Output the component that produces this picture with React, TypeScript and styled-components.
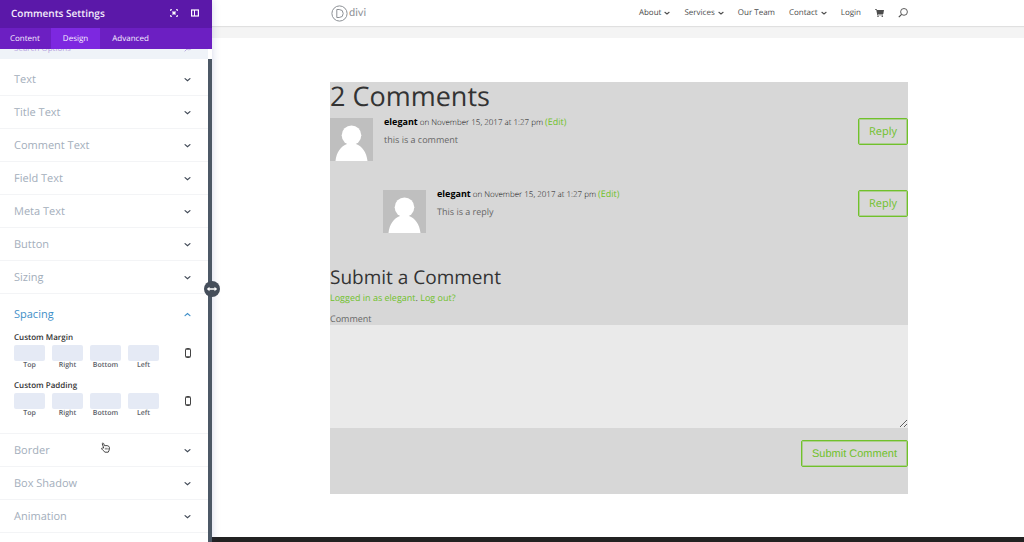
import React from "react";
import styled, { createGlobalStyle } from "styled-components";

const GREEN = "#70c12b";

const Global = createGlobalStyle`
  *, *::before, *::after { box-sizing: border-box; }
  body {
    margin: 0;
    background: #fff;
    font-family: "Open Sans", "Liberation Sans", sans-serif;
    font-size: 9px;
    color: #666;
    text-rendering: geometricPrecision;
  }
  button, input, textarea { font: inherit; color: inherit; margin: 0; text-rendering: inherit; }
  h1, h2, h3, p { margin: 0; font-weight: 400; }
  a { color: ${GREEN}; text-decoration: none; }
`;

const Shell = styled.div`
  display: flex;
  height: 100vh;
  overflow: hidden;
`;

const Panel = styled.aside`
  position: relative;
  display: flex;
  flex-direction: column;
  flex: 0 0 212px;
  box-shadow: 0 0 8px rgba(60, 70, 160, 0.22);
  z-index: 1;
`;

const PanelHeader = styled.header`
  display: flex;
  align-items: center;
  gap: 13px;
  flex: 0 0 28px;
  padding: 0 13px 2px 11px;
  background: #5b18a9;
  color: #fff;
`;

const PanelTitle = styled.h2`
  flex: 1;
  font-size: 10px;
  line-height: 16px;
  font-weight: 600;
  color: #f4edfb;
`;

const IconButton = styled.button`
  display: flex;
  padding: 0;
  border: 0;
  background: none;
  color: inherit;
`;

const Tabs = styled.nav`
  display: flex;
  flex: 0 0 21px;
  background: #6c1fc2;
`;

const Tab = styled.button<{ $active?: boolean }>`
  padding: 0 12px;
  border: 0;
  background: ${(p) => (p.$active ? "#7d28e0" : "transparent")};
  color: #f7f0ff;
  font-size: 8px;
  font-weight: 500;
  &:first-child { padding: 0 11px 0 10px; }
`;

const PanelScroll = styled.div`
  flex: 1;
  overflow: hidden;
  background: #fff;
  border-right: 4px solid #4c5866;
  border-image: linear-gradient(#fff 11px, #4c5866 11px) 1;
  border-width: 0 4px 0 0;
`;

const SearchBar = styled.label`
  display: flex;
  align-items: flex-end;
  height: 10px;
  overflow: hidden;
  padding: 0 16px 0 14px;
  background: #eff3f8;
  color: #b8a6e0;
`;

const SearchInput = styled.input`
  flex: 1;
  min-width: 0;
  height: 22px;
  padding: 0;
  border: 0;
  background: none;
  font-size: 8px;
  &::placeholder { color: #b8a6e0; opacity: 1; }
`;

const SearchGlyph = styled.span`
  display: flex;
  align-items: center;
  height: 22px;
`;

const Group = styled.section`
  border-bottom: 1px solid #f3f4f6;
  &:nth-of-type(1) { padding-top: 4px; }
`;

const GroupToggle = styled.button<{ $open?: boolean }>`
  display: flex;
  align-items: center;
  justify-content: space-between;
  width: 100%;
  height: ${(p) => (p.$open ? 40 : 32)}px;
  padding: 0 17px 0 14px;
  border: 0;
  background: none;
  color: ${(p) => (p.$open ? "#3f8fc8" : "#a3aebb")};
  font-size: 11px;
  text-align: left;
`;

const Fields = styled.div`
  display: flex;
  flex-direction: column;
  gap: 11px;
  height: 99px;
  padding: 0 16px 0 14px;
`;

const Field = styled.fieldset`
  margin: 0;
  padding: 0;
  border: 0;
  color: #444;
`;

const FieldName = styled.legend`
  padding: 0;
  font-size: 8px;
  line-height: 8px;
  font-weight: 600;
  color: #333;
  margin-bottom: 3px;
`;

const FieldRow = styled.div`
  display: flex;
  gap: 7px;
`;

const Side = styled.label`
  display: flex;
  flex-direction: column;
  align-items: center;
  width: 31px;
  font-size: 7px;
  line-height: 10px;
  font-weight: 600;
  color: #5c6068;
`;

const SideInput = styled.input`
  width: 100%;
  height: 16px;
  padding: 0 4px;
  border: 0;
  border-radius: 2px;
  background: #e5eaf5;
`;

const DeviceButton = styled(IconButton)`
  align-self: flex-start;
  padding: 3px 1px;
  margin-left: auto;
  color: #444;
`;

const ResizeHandle = styled.button`
  position: absolute;
  right: -8px;
  top: 281px;
  display: flex;
  align-items: center;
  justify-content: center;
  width: 16px;
  height: 16px;
  padding: 0;
  border: 0;
  border-radius: 50%;
  background: #454e5b;
  color: #fff;
`;

const Pointer = styled.svg`
  position: absolute;
  left: 101px;
  top: 442px;
`;

const Page = styled.div`
  flex: 1;
  min-width: 0;
  display: flex;
  flex-direction: column;
`;

const SiteHeader = styled.header`
  display: flex;
  align-items: center;
  justify-content: space-between;
  flex: 0 0 26px;
  padding: 0 116px 0 119px;
  background: #fff;
  box-shadow: 0 1px 1px rgba(0, 0, 0, 0.08);
  z-index: 0;
`;

const Logo = styled.a`
  display: flex;
  align-items: center;
  gap: 1px;
  color: #8d9196;
  font-family: Lato, sans-serif;
  font-size: 11px;
  line-height: 16px;
`;

const Nav = styled.nav`
  display: flex;
  align-items: center;
  gap: 14px;
`;

const NavLink = styled.a`
  display: flex;
  align-items: center;
  gap: 3px;
  color: #4c4c4c;
  font-size: 8px;
  line-height: 12px;
  font-weight: 500;
`;

const Strip = styled.div`
  flex: 0 0 12px;
  background: #f4f4f4;
`;

const Main = styled.main`
  flex: 1;
  padding: 44px 116px 43px 118px;
`;

const Comments = styled.section`
  height: 412px;
  background: #d7d7d7;
`;

const Heading = styled.h1`
  font-size: 27px;
  line-height: 28px;
  color: #333;
  padding-bottom: 8px;
`;

const Comment = styled.article<{ $nested?: boolean }>`
  display: flex;
  align-items: flex-start;
  gap: 11px;
  height: 72px;
  padding-left: ${(p) => (p.$nested ? 53 : 0)}px;
`;

const CommentBody = styled.div`
  flex: 1;
`;

const Meta = styled.p`
  font-size: 8px;
  line-height: 8px;
  font-weight: 300;
  color: #111;
  margin-bottom: 7px;
  b { font-size: 9px; font-weight: 700; color: #000; }
  a { font-size: 9px; font-weight: 400; }
`;

const Text = styled.p`
  font-size: 9px;
  line-height: 12px;
`;

const OutlineButton = styled.button<{ $native?: boolean }>`
  height: 27px;
  padding: 0 10px;
  border: 1px solid ${GREEN};
  border-radius: 2px;
  box-shadow: inset 0 0 0 1px rgba(112, 193, 43, 0.4);
  background: none;
  color: ${GREEN};
  font-size: 11px;
  ${(p) => p.$native && `font-family: "Liberation Sans", Arial, sans-serif;`}
`;

const SubHeading = styled.h3`
  font-size: 19px;
  line-height: 26px;
  color: #333;
  padding: 2px 0;
`;

const Form = styled.form`
  display: flex;
  flex-direction: column;
`;

const FieldLabel = styled.label`
  padding-top: 8px;
  font-size: 9px;
  line-height: 13px;
`;

const CommentInput = styled.textarea`
  height: 103px;
  border: 0;
  background: #eaeaea;
  resize: vertical;
`;

const Actions = styled.div`
  display: flex;
  justify-content: flex-end;
  padding-top: 12px;
`;

const Footer = styled.footer`
  flex: 0 0 5px;
  background: #222;
`;

const Chevron = ({ up, size = 7 }: { up?: boolean; size?: number }) => (
  <svg width={size} height={size} viewBox="0 0 8 8" fill="none" stroke={up ? "#3f8fc8" : "currentColor"} strokeWidth="1.4" strokeLinecap="round">
    <path d={up ? "M1.2 5.3 4 3l2.8 2.3" : "M1.2 3 4 5.3 6.8 3"} />
  </svg>
);

const DarkChevron = styled.span`
  display: flex;
  color: #3d4653;
`;

const SearchIcon = ({ size }: { size: number }) => (
  <svg width={size} height={size} viewBox="0 0 10 10" fill="none" stroke="currentColor" strokeWidth="0.9">
    <circle cx="6" cy="3.9" r="3.4" />
    <path d="M3.6 6.4 0.8 9.2" strokeWidth="1.2" />
  </svg>
);

const Avatar = () => (
  <svg width="43" height="43" viewBox="0 0 43 43" role="img" aria-label="elegant">
    <rect width="43" height="43" fill="#bfbfbf" />
    <circle cx="21.5" cy="17.2" r="9.8" fill="#fff" />
    <path d="M5.5 43C6.5 34 11 28 17 26l1.5-1.5h6L26 26c6 2 10.500 8 11.500 17Z" fill="#fff" />
  </svg>
);

function ToggleGroup({ name }: { name: string }) {
  return (
    <Group>
      <GroupToggle>
        {name}
        <DarkChevron><Chevron /></DarkChevron>
      </GroupToggle>
    </Group>
  );
}

function SpacingField({ name }: { name: string }) {
  return (
    <Field>
      <FieldName>{name}</FieldName>
      <FieldRow>
        {["Top", "Right", "Bottom", "Left"].map((side) => (
          <Side key={side}>
            <SideInput />
            {side}
          </Side>
        ))}
        <DeviceButton type="button" aria-label="Responsive values">
          <svg width="6" height="10" viewBox="0 0 6 10" fill="none" stroke="currentColor">
            <rect x="0.5" y="0.5" width="5" height="9" rx="1" />
            <path d="M1 1.5h4M1 8.5h4" strokeWidth="0.8" />
          </svg>
        </DeviceButton>
      </FieldRow>
    </Field>
  );
}

function CommentItem({ text, nested }: { text: string; nested?: boolean }) {
  return (
    <Comment $nested={nested}>
      <Avatar />
      <CommentBody>
        <Meta>
          <b>elegant</b> on November 15, 2017 at 1:27 pm <a href="#edit">(Edit)</a>
        </Meta>
        <Text>{text}</Text>
      </CommentBody>
      <OutlineButton>Reply</OutlineButton>
    </Comment>
  );
}

export default function App() {
  return (
    <>
      <Global />
      <Shell>
        <Panel>
          <PanelHeader>
            <PanelTitle>Comments Settings</PanelTitle>
            <IconButton aria-label="Expand">
              <svg width="8" height="8" viewBox="0 0 8 8" fill="none" stroke="currentColor" strokeWidth="0.8">
                <path d="M.5 2V.5H2M6 .5h1.500V2M7.500 6v1.500H6M2 7.500H.5V6" />
                <rect x="2.5" y="2.5" width="3" height="3" rx=".8" fill="currentColor" stroke="none" />
                <path d="m1.500 1.500 1.200 1.200M6.500 1.500 5.300 2.700M1.500 6.500l1.200-1.200M6.500 6.500 5.300 5.300" strokeWidth="0.6" />
              </svg>
            </IconButton>
            <IconButton aria-label="Dock panel">
              <svg width="8" height="8" viewBox="0 0 8 8" fill="none" stroke="currentColor">
                <rect x=".6" y="1" width="6.8" height="6" strokeWidth="1.2" />
                <path d="M3.500 1v6" />
              </svg>
            </IconButton>
          </PanelHeader>
          <Tabs>
            <Tab>Content</Tab>
            <Tab $active>Design</Tab>
            <Tab>Advanced</Tab>
          </Tabs>
          <PanelScroll>
            <SearchBar>
              <SearchInput placeholder="Search Options" />
              <SearchGlyph><SearchIcon size={8} /></SearchGlyph>
            </SearchBar>
            {["Text", "Title Text", "Comment Text", "Field Text", "Meta Text", "Button", "Sizing"].map((n) => (
              <ToggleGroup key={n} name={n} />
            ))}
            <Group>
              <GroupToggle $open>
                Spacing
                <Chevron up />
              </GroupToggle>
              <Fields>
                <SpacingField name="Custom Margin" />
                <SpacingField name="Custom Padding" />
              </Fields>
            </Group>
            {["Border", "Box Shadow", "Animation"].map((n) => (
              <ToggleGroup key={n} name={n} />
            ))}
          </PanelScroll>
          <ResizeHandle aria-label="Resize panel">
            <svg width="12" height="6" viewBox="0 0 12 6" fill="currentColor">
              <path d="M0.800 3 3.500.8v1.500h5V.8L11.200 3 8.500 5.200V3.700h-5v1.500Z" />
            </svg>
          </ResizeHandle>
          <Pointer width="9" height="11" viewBox="0 0 9 11" fill="#fff" stroke="#333" strokeWidth="0.9" strokeLinejoin="round">
            <path d="M2.700 6 1.300 2C1 1 2.200.6 2.600 1.500l.9 2.200 2.600-.1 1.700.7.700 1.300-.4 2.700-.9 1.900H4L2.200 8.500.7 7c-.5-.7.300-1.300 1-.900Z" />
            <path d="M4.300 5.800v1.800M5.700 5.800v1.800M7 5.800v1.800" strokeWidth="0.6" />
          </Pointer>
        </Panel>

        <Page>
          <SiteHeader>
            <Logo href="#home">
              <svg width="17" height="17" viewBox="0 0 17 17" fill="none" stroke="currentColor" strokeWidth="1">
                <circle cx="8.5" cy="8.5" r="7.6" />
                <path d="M5.800 4.500h2.400a4 4 0 0 1 0 8H5.800Z" />
              </svg>
              divi
            </Logo>
            <Nav>
              <NavLink href="#about">About <Chevron size={6} /></NavLink>
              <NavLink href="#services">Services <Chevron size={6} /></NavLink>
              <NavLink href="#team">Our Team</NavLink>
              <NavLink href="#contact">Contact <Chevron size={6} /></NavLink>
              <NavLink href="#login">Login</NavLink>
              <NavLink href="#cart" aria-label="Cart">
                <svg width="9" height="8" viewBox="0 0 9 8" fill="currentColor">
                  <path d="M0 .3h1.800l.3.700H9L8.300 4.900H2.900l.1.500h5v.8H2.300L1.300 1.100H0Z" />
                  <circle cx="3" cy="7.2" r=".8" />
                  <circle cx="7.3" cy="7.2" r=".8" />
                </svg>
              </NavLink>
              <NavLink href="#search" aria-label="Search"><SearchIcon size={10} /></NavLink>
            </Nav>
          </SiteHeader>
          <Strip />
          <Main>
            <Comments>
              <Heading>2 Comments</Heading>
              <CommentItem text="this is a comment" />
              <CommentItem text="This is a reply" nested />
              <SubHeading>Submit a Comment</SubHeading>
              <Form>
                <Text>
                  <a href="#profile">Logged in as elegant</a>. <a href="#logout">Log out?</a>
                </Text>
                <FieldLabel htmlFor="comment">Comment</FieldLabel>
                <CommentInput id="comment" />
                <Actions>
                  <OutlineButton type="button" $native>Submit Comment</OutlineButton>
                </Actions>
              </Form>
            </Comments>
          </Main>
          <Footer />
        </Page>
      </Shell>
    </>
  );
}
